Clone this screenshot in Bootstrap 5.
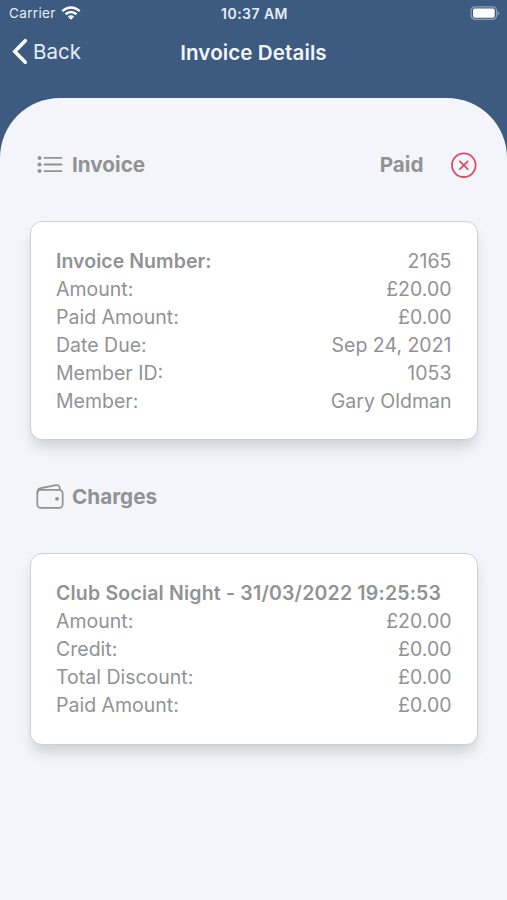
<!DOCTYPE html>
<html lang="en">
<head>
<meta charset="utf-8">
<meta name="viewport" content="width=device-width, initial-scale=1">
<title>Invoice Details</title>
<link href="https://cdn.jsdelivr.net/npm/bootstrap@5.3.0/dist/css/bootstrap.min.css" rel="stylesheet">
<style>
  body { background: #3d5b81; font-family: Inter, "Liberation Sans", sans-serif; color: #919294; }
  .status-row { height: 27px; font-size: 13.5px; color: #e6edf7; padding: 0 7px 0 9px; }
  .carrier { letter-spacing: .35px; }
  .clock { font-size: 14px; letter-spacing: .45px; }
  .title-row { height: 71px; padding: 3px 11px 0 11px; }
  .title-row .inner { height: 44px; }
  .side { flex: 1 1 0; }
  .back-link { font-size: 20.5px; line-height: 28px; color: #e6edf7; gap: 5px; }
  .screen-title { font-size: 20.6px; font-weight: 600; letter-spacing: .08px; color: #f1f5fb; padding-top: 2px; }
  .sheet { background: #f4f5fa; border-radius: 60px 60px 0 0; padding: 0 29.5px 0 30px; }
  .section-head { font-size: 20.7px; font-weight: 700; padding: 0 0 0 6px; }
  .head-one { height: 123px; padding-top: 10px; }
  .head-two { height: 113px; }
  .info-card { border: 1px solid #cfd0d2; border-radius: 12px; padding: 24.6px 25px 24.2px; box-shadow: 0 9px 13px -2px rgba(0,0,0,.15); }
  .line { height: 28.12px; font-size: 19.5px; line-height: 28.9px; white-space: nowrap; }
  .line.strong { font-weight: 600; letter-spacing: .05px; }
  .line.strong .plain { font-weight: 400; }
  .line.charge-name { letter-spacing: .19px; }
</style>
</head>
<body class="min-vh-100 d-flex flex-column">
<header>
  <div class="status-row d-flex align-items-center">
    <div class="side d-flex align-items-center">
      <span class="carrier">Carrier</span>
      <svg class="ms-1" width="22" height="15" viewBox="0 0 22 15" fill="none" stroke="#fff" stroke-width="2.4"><path d="M2.3 5.1Q11-2 19.7 5.1M5.5 8.2Q11 3.8 16.5 8.2"/><path d="M7.8 10.6Q11 8 14.2 10.6L11 13.8Z" fill="#fff" stroke="none"/></svg>
    </div>
    <span class="clock fw-semibold">10:37 AM</span>
    <div class="side d-flex justify-content-end">
      <svg width="31" height="15" viewBox="0 0 31 15"><rect x="2.1" y=".8" width="25.5" height="12.6" rx="4" fill="none" stroke="#8da0b8" stroke-width="1.2"/><rect x="4" y="2.5" width="21.7" height="9.2" rx="1.8" fill="#fff"/><path d="M28.7 5v4.6q1.6-.8 1.6-2.3T28.7 5" fill="#8da0b8"/></svg>
    </div>
  </div>
  <div class="title-row">
    <div class="inner d-flex align-items-center">
      <div class="side d-flex"><a class="back-link d-inline-flex align-items-center text-decoration-none" href="#">
        <svg width="17" height="28" viewBox="0 0 17 28" fill="none" stroke="#fff" stroke-width="3.6" stroke-linecap="round" stroke-linejoin="miter"><path d="M14.3 2.7L3.8 13.4l10.5 10.8"/></svg><span>Back</span></a></div>
      <h1 class="screen-title mb-0">Invoice Details</h1>
      <div class="side"></div>
    </div>
  </div>
</header>
<main class="sheet flex-grow-1">
  <div class="section-head head-one d-flex align-items-center">
    <svg width="28" height="20" viewBox="0 0 28 20" fill="none" stroke="#919294" stroke-width="1.8" stroke-linecap="round"><path d="M8.5 2.9h17M8.5 9.5h17M8.5 16.1h17"/><g fill="#919294" stroke="none"><circle cx="3.5" cy="2.9" r="2"/><circle cx="3.5" cy="9.5" r="2"/><circle cx="3.5" cy="16.1" r="2"/></g></svg>
    <span class="ms-2">Invoice</span>
    <span class="ms-auto">Paid</span>
    <svg class="ms-4" width="30" height="28" viewBox="0 0 30 28" fill="none" stroke="#d94f68" stroke-width="1.8" stroke-linecap="round"><circle cx="15.8" cy="14.2" r="11.8"/><path d="M11.9 10.3l7.8 7.8M19.7 10.3l-7.8 7.8"/></svg>
  </div>
  <section class="info-card bg-white">
    <div class="line strong d-flex justify-content-between"><span>Invoice Number:</span><span class="plain">2165</span></div>
    <div class="line d-flex justify-content-between"><span>Amount:</span><span>£20.00</span></div>
    <div class="line d-flex justify-content-between"><span>Paid Amount:</span><span>£0.00</span></div>
    <div class="line d-flex justify-content-between"><span>Date Due:</span><span>Sep 24, 2021</span></div>
    <div class="line d-flex justify-content-between"><span>Member ID:</span><span>1053</span></div>
    <div class="line d-flex justify-content-between"><span>Member:</span><span>Gary Oldman</span></div>
  </section>
  <div class="section-head head-two d-flex align-items-center">
    <svg width="28" height="28" viewBox="0 0 28 28" fill="none" stroke="#919294" stroke-width="1.7" stroke-linejoin="round"><rect x="1.3" y="6.8" width="25.4" height="18" rx="3.5"/><path d="M1.5 10.3V8.8Q1.5 5.9 5 5.2L20 2.1Q23.5 1.7 23.8 5.2V6.8"/><circle cx="21" cy="15.8" r="1.9" fill="#919294" stroke="none"/></svg>
    <span class="ms-2">Charges</span>
  </div>
  <section class="info-card bg-white">
    <div class="line strong charge-name"><span>Club Social Night - 31/03/2022 19:25:53</span></div>
    <div class="line d-flex justify-content-between"><span>Amount:</span><span>£20.00</span></div>
    <div class="line d-flex justify-content-between"><span>Credit:</span><span>£0.00</span></div>
    <div class="line d-flex justify-content-between"><span>Total Discount:</span><span>£0.00</span></div>
    <div class="line d-flex justify-content-between"><span>Paid Amount:</span><span>£0.00</span></div>
  </section>
</main>
<script src="https://cdn.jsdelivr.net/npm/bootstrap@5.3.0/dist/js/bootstrap.bundle.min.js"></script>
</body>
</html>
